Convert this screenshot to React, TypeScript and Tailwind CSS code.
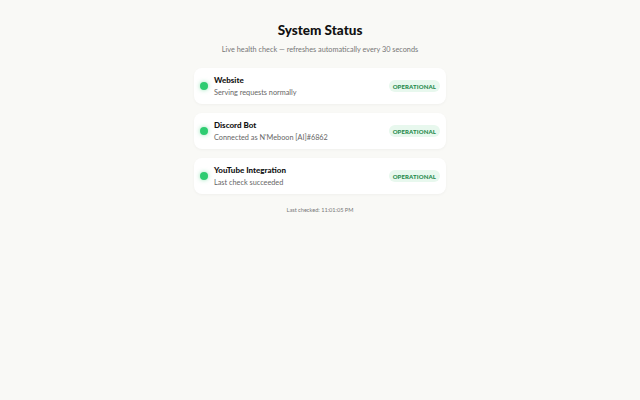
const services = [
  { name: 'Website', detail: 'Serving requests normally' },
  { name: 'Discord Bot', detail: "Connected as N'Meboon [AI]#6862" },
  { name: 'YouTube Integration', detail: 'Last check succeeded' },
];

function ServiceCard({ name, detail }: { name: string; detail: string }) {
  return (
    <div className="flex items-center h-[36px] px-[6px] bg-white rounded-[8px] shadow-[0_1px_3px_rgba(0,0,0,0.04)]">
      <span className="w-[8px] h-[8px] rounded-full bg-[#2ecc71] shadow-[0_0_4px_rgba(46,204,113,0.5)]" />
      <div className="flex-1 ml-[6px] pt-[1px] flex flex-col leading-none">
        <span className="text-[8px] font-black text-[#111]">{name}</span>
        <span className="mt-[5px] text-[7.3px] text-[#666]">{detail}</span>
      </div>
      <span className="px-[4px] h-[12px] flex items-center rounded-full bg-[#e8f8ee] text-[6px] font-black tracking-[0.02em] text-[#1f8a4c]">
        OPERATIONAL
      </span>
    </div>
  );
}

export default function App() {
  return (
    <div className="w-[640px] h-[400px] bg-[#f9f9f6] font-['Lato',sans-serif] flex flex-col items-center pt-[22px]">
      <h1 className="text-[13.5px] font-black text-[#111] leading-[16px]">System Status</h1>
      <p className="mt-[7px] text-[7.3px] text-[#777] leading-[10px]">
        Live health check — refreshes automatically every 30 seconds
      </p>
      <div className="mt-[13px] w-[252px] flex flex-col gap-[9px]">
        {services.map((s) => (
          <ServiceCard key={s.name} {...s} />
        ))}
      </div>
      <p className="mt-[12px] text-[5.6px] text-[#777] leading-[8px]">Last checked: 11:01:05 PM</p>
    </div>
  );
}
